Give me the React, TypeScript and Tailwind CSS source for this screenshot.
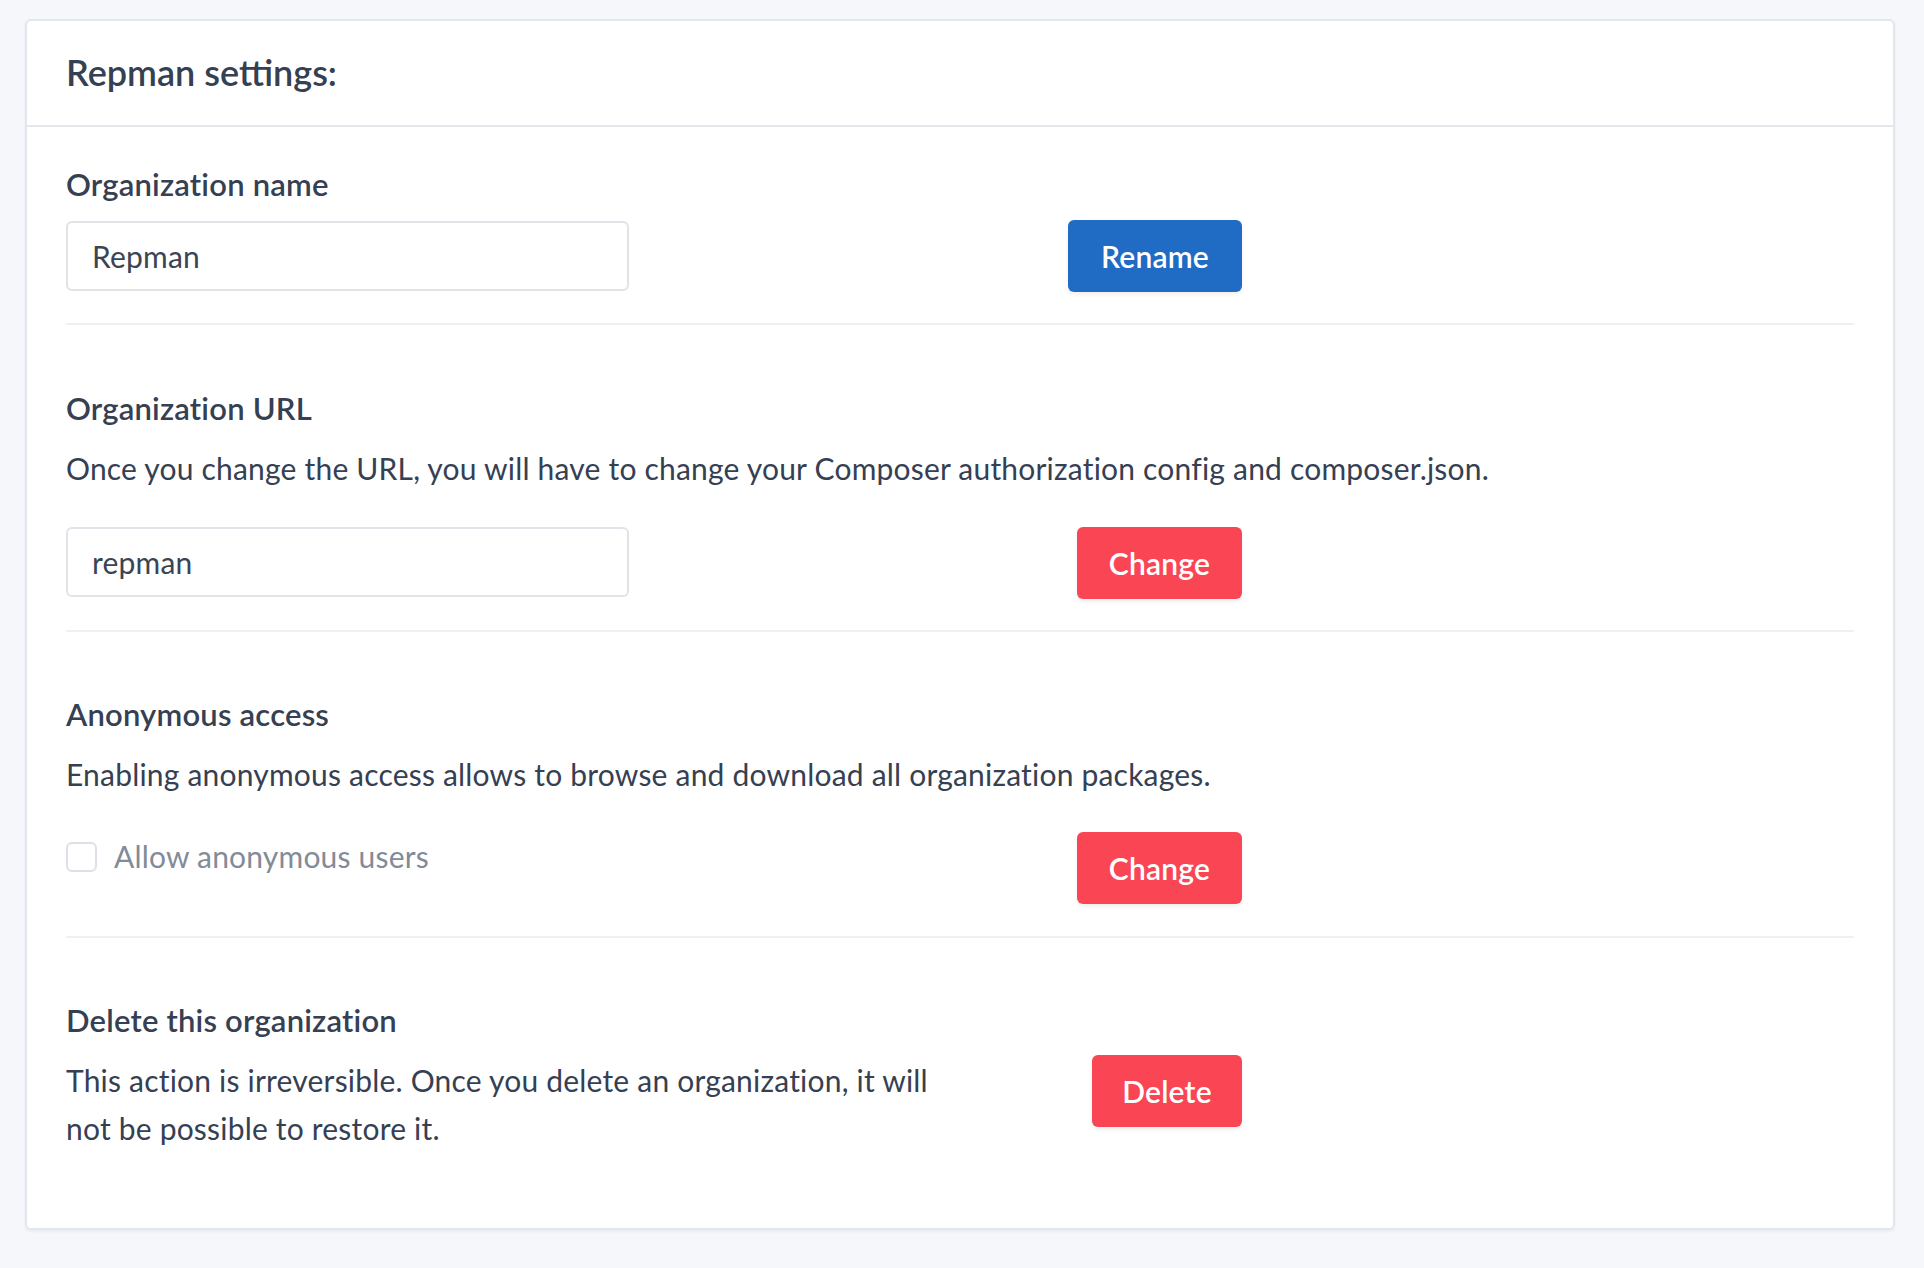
import React from 'react';

const FONT = "font-['Lato','Noto_Sans',sans-serif]";

function Divider() {
  return <div className="h-[2px] bg-[#eef0f3]" />;
}

function Btn({ children, color, width }: { children: React.ReactNode; color: 'blue' | 'red'; width: string }) {
  return (
    <button
      type="button"
      className={`h-[72px] ${width} rounded-[6px] text-white text-[30px] font-semibold tracking-[0.2px] shadow-[0_3px_4px_rgba(0,0,0,0.06)] ${
        color === 'blue' ? 'bg-[#206bc4]' : 'bg-[#fa4654]'
      }`}
    >
      {children}
    </button>
  );
}

function TextInput({ value }: { value: string }) {
  return (
    <input
      readOnly
      value={value}
      className="w-[563px] h-[70px] px-[24px] border-2 border-[#e0e4e9] rounded-[6px] text-[30px] tracking-[0.2px] text-[#3b4454] outline-none bg-white"
    />
  );
}

export default function App() {
  return (
    <div className={`min-h-[1268px] bg-[#f5f7fb] pt-[19px] pl-[25px] pr-[30px] ${FONT} text-[#354052]`}>
      <div className="w-[1870px] h-[1211px] bg-white border-2 border-[#e3e6eb] rounded-[6px] shadow-[0_2px_3px_rgba(0,40,100,0.05)]">
        <div className="h-[106px] border-b-2 border-[#e3e6eb] flex items-center px-[39px] pb-[3px]">
          <h1 className="text-[36px] font-semibold leading-none">Repman settings:</h1>
        </div>

        <div className="px-[39px] pt-[33px] leading-[48px] text-[30px] tracking-[0.2px]">
          {/* Organization name */}
          <div className="font-semibold text-[31px]">Organization name</div>
          <div className="mt-[13px] w-[1176px] flex justify-between items-start">
            <TextInput value="Repman" />
            <div className="-mt-[1px]">
              <Btn color="blue" width="w-[174px]">Rename</Btn>
            </div>
          </div>
          <div className="mt-[31px]">
            <Divider />
          </div>

          {/* Organization URL */}
          <div className="mt-[59px] font-semibold text-[31px]">Organization URL</div>
          <p className="mt-[12px]">
            Once you change the URL, you will have to change your Composer authorization config and composer.json.
          </p>
          <div className="mt-[35px] w-[1176px] flex justify-between items-start">
            <TextInput value="repman" />
            <Btn color="red" width="w-[165px]">Change</Btn>
          </div>
          <div className="mt-[31px]">
            <Divider />
          </div>

          {/* Anonymous access */}
          <div className="mt-[58px] font-semibold text-[31px]">Anonymous access</div>
          <p className="mt-[12px]">
            Enabling anonymous access allows to browse and download all organization packages.
          </p>
          <div className="mt-[34px] w-[1176px] flex justify-between items-start">
            <label className="flex items-start gap-[17px] text-[#828b98]">
              <span className="mt-[10px] w-[31px] h-[30px] border-2 border-[#dde1e7] rounded-[6px] bg-white" />
              <span>Allow anonymous users</span>
            </label>
            <Btn color="red" width="w-[165px]">Change</Btn>
          </div>
          <div className="mt-[32px]">
            <Divider />
          </div>

          {/* Delete */}
          <div className="mt-[58px] font-semibold text-[31px]">Delete this organization</div>
          <div className="mt-[12px] w-[1176px] flex justify-between items-start">
            <p className="w-[900px]">
              This action is irreversible. Once you delete an organization, it will
              <br />
              not be possible to restore it.
            </p>
            <div className="-mt-[1px]">
              <Btn color="red" width="w-[150px]">Delete</Btn>
            </div>
          </div>
        </div>
      </div>
    </div>
  );
}
